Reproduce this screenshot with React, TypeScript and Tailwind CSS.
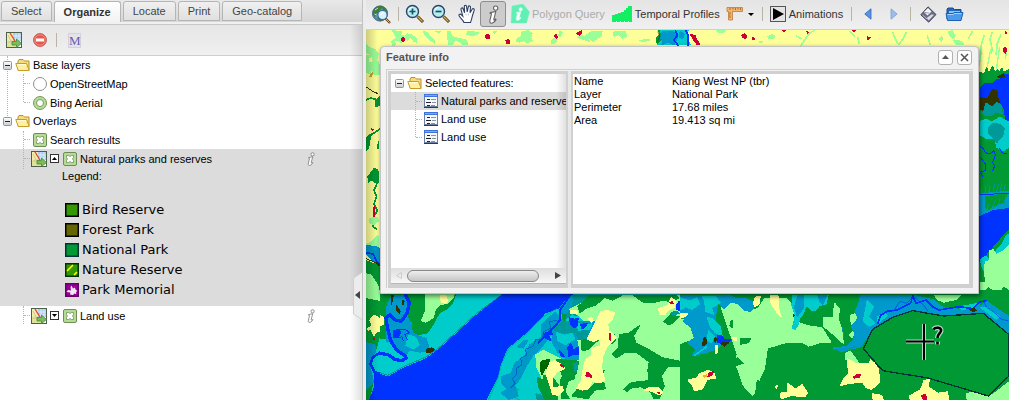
import React, { useState } from "react";

/* ---------- shared icons ---------- */

const LayerIcon = () => (
  <svg width="16" height="16" viewBox="0 0 16 16" className="shrink-0">
    <rect x=".5" y=".5" width="15" height="15" fill="#fff" stroke="#4d5f4d" />
    <rect x="1" y="1" width="6" height="14" fill="#f3ecab" />
    <rect x="7" y="1" width="8" height="8" fill="#a9cdf0" />
    <path d="M10 1v8M13 1v8M7 4h8M7 7h8" stroke="#dcebfa" />
    <path d="M1 9l5-1 4 2v5H1z" fill="#dfe39a" />
    <path d="M2 3l4 8M2 10h4" stroke="#cfc88c" fill="none" />
    <path d="M4 1l5 8" stroke="#e5482d" strokeWidth="1.400" />
    <path d="M6 9.500h4.500V7l5 4.500-5 4V13H6z" fill="#7dbb5c" stroke="#3f8a33" strokeWidth=".8" />
  </svg>
);

const FolderIcon = () => (
  <svg width="16" height="14" viewBox="0 0 16 14" className="shrink-0">
    <path d="M3 12V3l1-1.500h4L9.500 3H14v9z" fill="#f6dc7c" stroke="#b98f2a" />
    <path d="M.8 5.500h10.700l2.700 7H3.200z" fill="#fff0a0" stroke="#c89c2c" />
    <path d="M2.200 6.600h8.800" stroke="#fffde0" />
  </svg>
);

const ToggleIcon = () => (
  <svg width="9" height="9" viewBox="0 0 9 9" className="block">
    <defs>
      <linearGradient id="tgl" x1="0" y1="0" x2="0" y2="1">
        <stop offset="0" stopColor="#fff" />
        <stop offset="1" stopColor="#c8ccd2" />
      </linearGradient>
    </defs>
    <rect x=".5" y=".5" width="8" height="8" rx="1" fill="url(#tgl)" stroke="#8a97a8" />
    <path d="M2 4.500h5" stroke="#222" />
  </svg>
);

const FormIcon = () => (
  <svg width="14" height="14" viewBox="0 0 14 14" className="shrink-0" shapeRendering="crispEdges">
    <rect x=".5" y=".5" width="13" height="12" fill="#f4f7fc" stroke="#6c7f9f" />
    <rect x="0" y="0" width="14" height="3" fill="#3f74dd" />
    <rect x="1" y="1" width="12" height="1" fill="#7ca8f5" />
    <path d="M3 5.500h3M2 8.500h5M3 11.500h3" stroke="#222" />
    <path d="M7 5.500h5M8 8.500h4M7 11.500h4" stroke="#8b93a0" />
    <path d="M0 13.500h14" stroke="#2d3c58" />
  </svg>
);

const InfoGlyph = ({ size = 14, fill = "#fff", stroke = "#666" }: { size?: number; fill?: string; stroke?: string }) => (
  <svg width={size} height={size} viewBox="0 0 14 14">
    <circle cx="8.600" cy="2.300" r="1.600" fill={fill} stroke={stroke} strokeWidth=".8" />
    <path
      d="M4.600 5.600l4.100-.9-1.500 6c-.1.600.5.400 1.400-.4l.3.500C7.700 12.600 6.500 13.400 5.500 13.400c-1.200 0-1.400-1-1.100-2.200l1.100-4.600c0-.4-.4-.4-1-.4z"
      fill={fill}
      stroke={stroke}
      strokeWidth=".8"
    />
  </svg>
);

const Magnifier = ({ minus = false }: { minus?: boolean }) => (
  <svg width="20" height="20" viewBox="0 0 20 20">
    <path d="M12.500 12.500l5.500 5.500" stroke="#4b3a12" strokeWidth="3" />
    <path d="M12.500 12.500l5 5" stroke="#e0ae3c" strokeWidth="1.300" />
    <circle cx="7.500" cy="7.500" r="6" fill="#b6eef0" stroke="#2a4468" strokeWidth="1.400" />
    <path d="M3.500 7a4.500 4.500 0 0 1 4-3.800" stroke="#fff" fill="none" />
    <path d={minus ? "M4.500 7.500h6" : "M4.500 7.500h6M7.500 4.500v6"} stroke="#15546b" strokeWidth="1.700" />
  </svg>
);

const GlobeIcon = () => (
  <svg width="19" height="19" viewBox="0 0 19 19">
    <circle cx="8" cy="8.500" r="7.600" fill="#5b8fb5" stroke="#33597a" strokeWidth=".8" />
    <path d="M1 6l3-4 5-1.500 2 2-3 2-1 3-3 1-1 4-2-3zM10 1l4 2.500 1.500 4-2-1-3-2zM5 13l3-1 3 3-3 1.500z" fill="#3f7d3a" />
    <path d="M3 5l3-2M2.500 9l2 1" stroke="#bfe0ea" />
    <path d="M13.500 13.500l4.500 4.500" stroke="#6b4a12" strokeWidth="2.400" />
    <path d="M13.500 13.500l4 4" stroke="#e6b244" />
    <circle cx="10.500" cy="10" r="4.600" fill="#d9f2fb" stroke="#3d6fa0" strokeWidth="1.200" />
    <path d="M8.500 9.500l3-2" stroke="#fff" strokeWidth="1.400" />
  </svg>
);

const HandIcon = () => (
  <svg width="18" height="20" viewBox="0 0 18 20">
    <path
      d="M6 18.500c-.5-2-4-4.500-5-7-.4-1.300 1.200-1.900 2.200-.9l1.600 1.600L3 5.300c-.3-1.500 1.600-2 2.100-.5l1.500 4L6.300 2.600c0-1.600 2.100-1.700 2.300-.1L9.200 8l1.100-5.200c.4-1.400 2.300-1 2.200.4L12 8.700l2.200-3.500c.9-1.200 2.400-.4 2 1l-2 6.300c-.4 2.600-1 4-1.700 6z"
      fill="#fff"
      stroke="#2e3f63"
      strokeWidth="1.100"
    />
    <path d="M8 9.500v2M10.500 9.500v2" stroke="#aab4c8" strokeWidth=".7" />
  </svg>
);

const PolygonIcon = () => (
  <svg width="20" height="20" viewBox="0 0 20 20">
    <path d="M2 2L13 0l6.500 8-3 11H1z" fill="#5ff0b4" stroke="#7feec5" strokeWidth=".5" />
    <g transform="translate(2 3)">
      <InfoGlyph size={14} stroke="#d5fff0" />
    </g>
  </svg>
);

const BarsIcon = () => (
  <svg width="20" height="16" viewBox="0 0 20 16" shapeRendering="crispEdges">
    <path d="M0 16V9h3V8h3V7h3V6h3V4h2V2h2V0h4v16z" fill="#12ef62" />
    <path d="M4.500 16v-1M8.500 16v-1M12.500 16v-1M16.500 16v-1" stroke="#d6fbe3" />
  </svg>
);

const RulerIcon = () => (
  <svg width="17" height="16" viewBox="0 0 17 16">
    <path d="M1 1.500h15.500v4H6.500V14h-4V5.500H1z" fill="#efb672" stroke="#c07a34" strokeWidth=".8" />
    <path d="M4 2v2M7 2v1.500M9.500 2v2M12 2v1.500M14.500 2v2M3 7h2M3 9h1.500M3 11h2" stroke="#9a5a20" strokeWidth=".8" />
  </svg>
);

const DiamondIcon = () => (
  <svg width="17" height="17" viewBox="0 0 17 17">
    <path d="M8 .8L16 8.500 8.700 16.200.8 8.800z" fill="#6d6f86" stroke="#3c3d50" strokeWidth=".9" />
    <path d="M8 2l3.500 3.400-4 4L4 6z" fill="#f4f4f8" />
    <path d="M11.500 8.500l2.500.3-5.300 5.700-2-2.500z" fill="#dcdce6" />
    <path d="M2.500 9l4.500 4" stroke="#b5b6c6" />
    <path d="M5 6.500l4 .5" stroke="#9b9cb0" />
  </svg>
);

const OpenIcon = () => (
  <svg width="19" height="16" viewBox="0 0 19 16">
    <path d="M2 13V3l1-1h5l1.500 1.500H16V13z" fill="#2169bd" stroke="#164e94" />
    <path d="M4 5h11v3H4z" fill="#8fc1f2" />
    <path d="M1 7.500h7l1-1h9l-2 8H2.500z" fill="#4b9be8" stroke="#1c62b4" />
    <path d="M2.500 8.500h6l1-1h7" stroke="#a5d2fa" fill="none" />
  </svg>
);

/* ---------- layer tree ---------- */

const Row = ({ children, className = "h-[19px]" }: { children: React.ReactNode; className?: string }) => (
  <div className={`flex items-center ${className}`}>{children}</div>
);

const Stub = () => <span className="ml-6 mr-[3px] w-[6px] shrink-0 border-t border-dotted border-[#b5b5b5]" />;

const Check = ({ id }: { id: string }) => (
  <span className="grid h-[14px] w-[14px] shrink-0 place-items-center">
    <input
      id={id}
      type="checkbox"
      defaultChecked
      className="col-start-1 row-start-1 h-[14px] w-[14px] appearance-none rounded-[2px] border border-[#6d8c57] bg-[#b5db94]"
    />
    <svg width="8" height="8" viewBox="0 0 8 8" className="pointer-events-none col-start-1 row-start-1">
      <path d="M.5.5h2L4 1.500 5.500.5h2v2L6.500 4l1 1.500v2h-2L4 6.500l-1.500 1h-2v-2L1.500 4l-1-1.500z" fill="#fff" stroke="#6f905b" strokeWidth=".8" />
    </svg>
  </span>
);

const Radio = ({ id, checked }: { id: string; checked?: boolean }) => (
  <span className="grid h-[14px] w-[14px] shrink-0 place-items-center">
    <input
      id={id}
      type="radio"
      name="base-layer"
      defaultChecked={checked}
      className="col-start-1 row-start-1 h-[14px] w-[14px] appearance-none rounded-full border border-[#8f8f8f] bg-white checked:border-[#789a60] checked:bg-[#b5db94]"
    />
    {checked && <span className="pointer-events-none col-start-1 row-start-1 h-2 w-2 rounded-full border border-[#7a9c63] bg-white" />}
  </span>
);

const Parent = ({ name }: { name: string }) => (
  <Row className="h-[18px]">
    <button aria-label={`Collapse ${name}`} className="ml-[3px] mr-[3px] bg-white">
      <ToggleIcon />
    </button>
    <FolderIcon />
    <span className="ml-[2px]">{name}</span>
  </Row>
);

const ExpandBox = ({ up, name }: { up?: boolean; name: string }) => (
  <button aria-label={name} className="ml-[3px] mr-1 grid h-[9px] w-[9px] shrink-0 place-items-center border border-[#333] bg-white">
    <svg width="5" height="3" viewBox="0 0 5 3">
      <path d={up ? "M0 3L2.500 0 5 3z" : "M0 0L2.500 3 5 0z"} fill="#000" />
    </svg>
  </button>
);

const LayerRow = ({ id, name, open }: { id: string; name: string; open?: boolean }) => (
  <Row>
    <span className="ml-6 mr-px w-[6px] shrink-0 border-t border-dotted border-[#b5b5b5]" />
    <LayerIcon />
    <ExpandBox up={open} name={`Toggle ${name}`} />
    <Check id={id} />
    <label htmlFor={id} className="ml-[3px] grow">{name}</label>
    <button aria-label={`About ${name}`} className="mr-11">
      <InfoGlyph size={14} stroke="#777" />
    </button>
  </Row>
);

const swatches = [
  { name: "Bird Reserve", fill: "#339900", edge: "#000", art: <path d="M2 12L12 2" stroke="#c030c0" strokeDasharray="1.500 .8" /> },
  { name: "Forest Park", fill: "#666600", edge: "#000", art: null },
  { name: "National Park", fill: "#009933", edge: "#003333", art: null },
  { name: "Nature Reserve", fill: "#339900", edge: "#003300", art: <path d="M2 8l6-6M9 12l3-3" stroke="#ff0" strokeWidth="1.600" /> },
  {
    name: "Park Memorial",
    fill: "#990099",
    edge: "#660066",
    art: <path d="M1.500 9l1.500-2 3 .6L5.500 4l1-1.500L8 5.500l2-1 .5 2 2 1.500-1.500 1 .4 2-2-.6L8 12l-3-.4.4-2z" fill="#f4e6f4" />,
  },
];

const tabs = ["Select", "Organize", "Locate", "Print", "Geo-catalog"];

const Divider = ({ className }: { className: string }) => <span className={`h-[14px] w-px shrink-0 bg-[#b8b5a4] ${className}`} />;

const LayerPanel = () => {
  const [active, setActive] = useState("Organize");
  return (
    <aside className="relative flex w-[362px] shrink-0 flex-col bg-white">
      <nav role="tablist" className="flex h-[22px] shrink-0 items-start gap-[2px] bg-linear-to-b from-[#e9e9e9] to-[#d6d6d6] pl-px pt-px">
        {tabs.map((t) => (
          <button
            key={t}
            role="tab"
            aria-selected={t === active}
            onClick={() => setActive(t)}
            className={
              t === active
                ? "h-[21px] rounded-t-[3px] border border-b-0 border-[#b5b5b5] bg-linear-to-b from-white to-[#f2f2f2] px-[9px] font-bold text-[#333]"
                : "h-5 rounded-t-[3px] border border-[#b5b5b5] bg-linear-to-b from-[#f0f0f0] to-[#e0e0e0] px-[9px] text-[#444]"
            }
          >
            {t}
          </button>
        ))}
      </nav>
      <div className="h-[3px] shrink-0 border-b border-[#c8c8c8] bg-[#f0f0f0]" />
      <div className="flex h-[31px] shrink-0 items-center border-b border-[#cfcfcf] bg-linear-to-b from-[#e6e6e6] to-[#f0f0f0] pl-[6px]">
        <button aria-label="Add layer"><LayerIcon /></button>
        <button aria-label="Remove layer" className="ml-[11px]">
          <svg width="14" height="14" viewBox="0 0 14 14">
            <circle cx="7" cy="7" r="6.400" fill="#e9574b" stroke="#c7574f" />
            <circle cx="7" cy="7" r="5.200" fill="none" stroke="#f49a90" strokeWidth=".8" />
            <rect x="3" y="5.500" width="8" height="3" fill="#fff" />
          </svg>
        </button>
        <Divider className="ml-[9px]" />
        <button aria-label="Metadata" className="ml-[11px] grid h-[15px] w-[13px] place-items-center border border-[#d2d2da] bg-[#e2e4ea] font-['Liberation_Serif',serif] text-[13px] leading-[13px] text-[#6a5cae]">
          M
        </button>
      </div>

      <div className="relative">
        <div className="absolute left-[7px] top-0 h-[60px] border-l border-dotted border-[#b5b5b5]" />
        <div className="relative">
          <Parent name="Base layers" />
          <div className="relative">
            <div className="absolute left-[23px] top-0 h-7 border-l border-dotted border-[#b5b5b5]" />
            <Row><Stub /><Radio id="osm" /><label htmlFor="osm" className="ml-[3px]">OpenStreetMap</label></Row>
            <Row><Stub /><Radio id="bing" checked /><label htmlFor="bing" className="ml-[3px]">Bing Aerial</label></Row>
          </div>
          <Parent name="Overlays" />
          <Row><Stub /><Check id="search" /><label htmlFor="search" className="ml-[3px]">Search results</label></Row>
          <section className="bg-[#dcdcdc]">
            <LayerRow id="parks" name="Natural parks and reserves" open />
            <p className="ml-[62px] h-8 leading-4">Legend:</p>
            <ul className="pb-[6px] pl-[65px] font-['DejaVu_Sans',sans-serif] text-[13px]">
              {swatches.map((s) => (
                <li key={s.name} className="flex h-5 items-center gap-[3px]">
                  <svg width="14" height="14" viewBox="0 0 14 14">
                    <rect x=".5" y=".5" width="13" height="13" fill={s.fill} stroke={s.edge} strokeWidth="2" />
                    {s.art}
                  </svg>
                  {s.name}
                </li>
              ))}
            </ul>
          </section>
          <LayerRow id="landuse" name="Land use" />
          <div className="absolute left-[23px] top-[75px] h-[38px] border-l border-dotted border-[#b5b5b5]" />
          <div className="absolute left-[23px] top-[250px] h-[18px] border-l border-dotted border-[#b5b5b5]" />
        </div>
      </div>
      <div className="pointer-events-none absolute bottom-0 right-0 top-[25px] w-3 bg-linear-to-r from-transparent to-black/12" />
      <button aria-label="Collapse panel" className="absolute right-0 top-[272px]">
        <svg width="9" height="48" viewBox="0 0 9 48" className="block">
          <path d="M9 .5L.5 6v36L9 47.500" fill="#ececec" stroke="#cfcfcf" />
          <path d="M7 19v8l-5-4z" fill="#444" />
        </svg>
      </button>
    </aside>
  );
};

/* ---------- map ---------- */

const Y = "#ffff99", L = "#99ff99", G = "#009933", B = "#0033ff", C = "#00cccc", M = "#0099cc", T = "#009999", D = "#333300", R = "#cc0033";

/* A round-joined outline in the fill colour softens the corners of each patch. */
const P = ({ f, d }: { f: string; d: string }) => <path fill={f} stroke={f} strokeWidth="4" strokeLinejoin="round" d={d} />;
const S = ({ c, w = 3, d }: { c: string; w?: number; d: string }) => (
  <path fill="none" stroke={c} strokeWidth={w} strokeLinejoin="round" strokeLinecap="round" d={d} />
);

const LandCover = () => (
  <svg className="absolute inset-0 h-full w-full" viewBox="366 30 643 370" preserveAspectRatio="xMinYMin slice" shapeRendering="crispEdges" role="img" aria-label="Land cover map">
    <rect x="366" y="30" width="643" height="370" fill={Y} />

    {/* northern strip, west */}
    <svg x="366" y="0" width="330" height="80" viewBox="0 0 990 240">
      <P f={L} d="M80 92l8 14 4 8-6 8 14-2 4 8 10-12 10 4 8-10 8 6 4 8 8 2-2-12-12-8-14-4-8 8-14-6 6-8zM78 124l6-6 4 16-8 2zM172 94l12 4 10 14 10 8 2 10-14-12-12-10zM244 94h8l4 14 14 6 30 6 4 12-14 0-16-12-12 4-2 10-12-2-2-18zM302 102l12 4 16-2 8-6-16-2-16-2zM382 94l4 6 4-6zM454 116l12-6 2-14 18-4 12 8-4 12 4 10-14 6-12-6-12 4-8-2zM582 94l6 2-6 14-4-4zM558 120l12-6 4 4-6 10-10 2zM680 94l28 0-2 12-16 12-10 6-10-12-10-6zM742 98l8-4 28 2 4 14-14 4-10-10-14 4zM822 122l22-4 6 2-18 4zM634 112l14-4 18 4 4 12-18-6zM208 94l16 0-4 4z" />
      <P f={R} d="M107 116l6-3 2 7-4 4-3-2zM358 108l8-5 6 8-4 5-8-3zM420 122l6-4 5 8-2 5-7-2zM566 108l5-4 4 8-3 3zM632 100l6-3 8-4 1 6-5 6-6-2zM974 104l16 4v20l-8-10z" />
      <P f={G} d="M872 114l10-10-4-12h8l6 16-8 26h-10z" />
      <P f={C} d="M884 92h82l-4 18 10 24H874l16-16z" />
      <P f={M} d="M890 94l32 0 12 18-10 22-18-8-18 8 4-14-10-8zM942 96l12 6-4 14-10-6z" />
      <S c={B} w={5} d="M928 90l6 16-10 14 12 16M958 90l8 14 0 32" />
      <S c={D} w={2} d="M876 96l6 14-8 14" />
    </svg>

    {/* northern strip, east */}
    <svg x="696" y="0" width="313" height="80" viewBox="18 0 939 240">
      <P f={R} d="M2 104l12 6 8 12 6 10-8 0-8-12zM156 106l8-4 6 6-4 8-8-4zM188 114l4 0 1 5-4-1zM278 91h8l-4 3zM350 94l6 3-2 3zM488 91l8 0-4 4zM532 110l4 2 4 0-6 8zM947 96l3 2-2 2zM942 144l5-2 2 10-3 8-6-8z" />
      <P f={L} d="M80 92h26l-8 6-12 0zM234 110l12-6 8 4-2 6-16 2zM208 125l8 0-2 2-6 0zM750 114l4-4 4 6-4 8-4-4zM776 96l10-4 8 16-4 8-10-8zM792 120l20 4 8 8-20 2-6-8z" />
      <S c={L} w={5} d="M372 92l-14 8-10 14-14 22M320 108l14 8M480 94l14 14M504 114l4 16M608 98l10 22 8 14 12-16 10-20M712 108l8 24M846 96l-10 18M882 106l-8 30-2 20M906 98l-6 20 6 26-2 16M932 106l-10 24-4 34" />
    </svg>

    {/* western margin */}
    <svg x="362" y="28" width="24" height="270" viewBox="0 0 72 810">
      <P f={L} d="M12 48l12 12 14 4 10 14-4 18 8 14 4 28-16 2-12-14-4 10-12-4V84l14-4-14-8z" />
      <P f={Y} d="M22 92l6-2 2 8-6 4z" />
      <P f="#bbaa22" d="M24 144l8-10-4 10-6 2z" />
      <S c={D} w={3} d="M14 178l18 12 14 6" />
      <P f={G} d="M42 216l10-10v26l-10 4zM14 336l6-14 8-4-6 24-2 16-6 8zM18 444l8-8 10-14 8 2 6 8v30l-12 2-8-10-10 8z" />
      <S c={G} w={5} d="M12 216l14-6 16 4M12 330l20-12 24-16M50 340l-2 20M48 460l-12 26 8 20-8 22 10 20-14 24 2 24 10 8" />
      <P f={R} d="M35 538l3-2-1 28-3 0zM30 303l3 2-3 1z" />
      <P f={L} d="M22 572l22-4 6 10-16 12-12-6zM14 650l18-10 14-16 4 4v26l-18 8-18 4z" />
      <P f={M} d="M12 652l36 6 24 16v46l-24-8-36-36z" />
      <S c={B} w={5} d="M12 674l22 4 12 26 14 10" />
      <S c={D} w={3} d="M12 692l30 12 20 18" />
      <P f={G} d="M12 698l30 12 14 14 16 10v76H12z" />
      <P f={L} d="M12 738l16 4 20 32v36H12z" />
    </svg>

    {/* eastern margin */}
    <svg x="976" y="46" width="33" height="254" viewBox="48 78 99 762">
      <S c={L} w={4} d="M64 96l-6 40M92 88l-10 50M118 84l-8 60M140 96l-4 20" />
      <P f={R} d="M134 86l3-2 2 8-3 6-3-4z" />
      <P f={G} d="M48 154l14 4 12 4 6-18 6 16 12-20 6 18 8-8 6 6 8-10 4 10 17-6v694H48z" />
      <P f={B} d="M62 202l12-10 24 0 12-14 12 0 6-12 20-2v146l-10-2-4-40-20-28-30 22-22-18z" />
      <P f={D} d="M62 234l20 4 10-18 6-12 12 4 2 18 6 16-14 20-18-4-10 10-14-4zM114 170l16-8 4 6-14 6z" />
      <P f={T} d="M64 278l8-6 6-22 20 12 12-14 14 8 2 26-16-6-18 10-18 0z" />
      <P f={C} d="M62 304l18-6 16 8 24-14 16 10 11 4v74l-16 12-20-10-6-28-24 2-18-10z" />
      <P f={T} d="M86 322l14-12 20 4 12 12-4 20-18 22-14-18-10-12z" />
      <S c={B} w={3} d="M60 378l10 8 6 12 14 4 12-10 4 14-8 20 6 12-6 14M60 410l16 22 0 20-14 4M62 458l6 12M140 402l-14-4-8-14" />
      <P f={M} d="M60 522l87-8v46l-60 16-27 14z" />
      <P f={G} d="M78 530l62-8-8 24-26 10-20 12-8-6z" />
      <S c={T} w={3} d="M62 524l4-22M74 522l4-24M86 520l4-22M98 520l6-30M108 520l8-28M118 520l8-30M130 518l6-26M80 572l6-20M96 568l10-28M114 562l6-26M132 556l6-30" />
      <S c={B} w={3} d="M60 524l87-4" />
      <P f={B} d="M60 590l40-18 47-6v58l-36 40-24 28-27 32z" />
      <P f={C} d="M62 718l16-10 8 8 40-42 12-24 9-8v30l-18 24-24 12-18 12 4 12-10-2 2 16-12 4-6-12z" />
      <P f={L} d="M76 726l12-4 0-30 12-2 8 14 20-10 19-18v132l-16-12-10 16-28-6-12-10-8-36z" />
      <P f={L} d="M62 788l18 0 6 10-8 8-16 10z" />
    </svg>

    {/* river mouth, western bank */}
    <svg x="366" y="290" width="14" height="110" viewBox="78 60 42 330">
      <rect x="78" y="60" width="42" height="330" fill={G} />
      <P f={L} d="M78 15h20l20 30v45l-40-8z" />
      <P f={Y} d="M90 150l12-14 8 4 10 6v36l-14 6-4 10-8-20-10 2v-4l12-10z" />
      <P f={R} d="M100 204l4 1 0 3-4-1z" />
      <P f={M} d="M78 218l24 6 8 18-14 40 6 50-24 28z" />
      <P f={C} d="M120 206v180H92l12-54-10-40 14-40z" />
      <P f={B} d="M120 307v83H90l14-40 0-44z" />
      <S c={B} w={8} d="M120 248l-22 14-6 20 12 24 16 6" />
    </svg>

    {/* estuary and western land */}
    <svg x="380" y="290" width="300" height="110" viewBox="0 120 900 330">
      <rect x="0" y="120" width="900" height="330" fill={C} />
      <P f={G} d="M0 120h230l-12 38-20 20-20 10-16 30-20 30-28 6-22-10-10-18-24-30-14 10-14 30-14 28H0z" />
      <P f={L} d="M136 122h90l-8 22-16 16-24 4-14 18-4 20-22 14-14-4 14-30-2-20z" />
      <P f={Y} d="M182 138l16 0 5 16-7 6-12-4zM0 198l10 4 0 20-10 6z" />
      <P f={M} d="M38 136l42 0 10 28-10 38 14 16 2 30 18 10 24 8 8 22-4 14-22 4-32-6-14 20-26-20-26-18-4-60 4-60z" />
      <P f={C} d="M86 256l20 6 12 22-18 12-22-10zM22 282l12-8 28 40 0 14-28-8z" />
      <P f={D} d="M36 136h4l-4 16-2 12zM50 168l4 6 6 12-2 3-8-9zM68 152l4 3-2 9-3-4zM140 298l16-4 6 4-6 8-16 2z" />
      <S c={B} w={10} d="M76 134l12 24-6 30-18 26-18-4-16-16-12 8 4 30 10 40 18 28 24 16 4 8-12 8-22-4-20-14-24-4" />
      <P f={B} d="M42 242l14-4 6 10-6 12-14 2z" />
      <S c={B} w={3} d="M40 246l16-8 20 0 12 10-14 6 8 16M52 264l14-4 4 12" />
      <S c={T} w={3} d="M366 134l-76 56-112 102-38 28-70 30-46 26-24-8" />
      <P f={B} d="M368 134H576L536 174l-40 14-56 58-60 50-20 50-8 36-34 66H0v-74l24 8 44-26 72-30 40-30 110-100z" />
      <P f={T} d="M542 182l30-46h64l-8 18-50 36-24 20zM576 188l18-18 8 8-14 20z" />
      <P f={L} d="M622 152l20-16H900v316H492l-6-70-16-30-2-38 22-12 30 14 30 16 32 4 14-32-6-60 30-26-34-30-18-10z" />
      <P f={M} d="M486 222l38-34 14 10-4 40-18 12-30 40-28 26-24 40-14 30-16 20 10 32-28 10-22-20 20-10-20-20 0-18 30-10 10-30 30-20 14-34 38-24z" />
      <P f={M} d="M542 172l14-20 22-12-4 28-24 30zM412 290l18-18 12 0-12 22z" />
      <S c={T} w={2} d="M516 202l-16 12-4 16 12 4-18 20-20 20 6 12-28 16-6 24-14 6 10 16-26 16 14 10-22 20-4 20 16 4-14 24 30 14M530 176l-36 22-26 22-24 28-60 50-20 46-10 40-28 64" />
      <S c="#0066cc" w={3} d="M530 210l-22 6 4 18-22 12-2 22-20 0-10 22-22 8 4 18-18 8 4 20-18 12 2 18-14 12 10 14-14 14" />
      <P f={T} d="M522 230l18-22 30 10 44-4 48 4 8 38-18 10-70 4-40 20-8 18-18-38z" />
      <P f={M} d="M518 242l28 10 40 0 8 38 0 38-34 0-24-20-18-28zM612 216l46 0 8 36-26-2z" />
      <P f={C} d="M530 248l24 8 22-6 8 16-28 18-22-12zM584 216l26 10 26-4-8 16-32 2z" />
      <P f={B} d="M568 204l16 4 10-2-4 24-8 4-10-10zM602 224l20-4-6 10-10 6zM564 292l8-10 8 18 14-8 0 22-16 0-12 6zM538 302l12 12 2 6-8 0zM492 250l22-4 4 6-14 0 8 20-18-10z" />
      <S c={B} w={6} d="M570 136l-30 44 0 30-20 24-22 20-22 24" />
      <P f={G} d="M548 192l10 4-4 14-6-4zM594 170l38-34 66 0 26 0-26 14-24-8-26 22-30 10-18 14zM762 136h126l8 8-26 10-20-4-30 8-30-2-12-8zM852 214l28-28 8 14 10 0-18 18-14 6zM718 254l28-4 32-22-18 30 8 22 30 14 50 30 50 10 0 16-34-2-20 30 8 30-14 38-16 0-10-22-30-14-30 4-10 10-10-6 22-20 54-6-4-30 4-26-40-30-32 0-28 18-12-12 20-18z" />
      <P f={G} d="M472 382l18 10 0-14 20-6 28 38-6 38H494l-18-39zM530 328l66 6-8 38-38 10-8-20-26-14zM542 390l10-20 30 0 0 16-18 8-10 30 14 22h-24zM606 298l-2-26 36-10 22 6-14 8-20 20-18 6zM576 438l16-20 30 4 20-20 28-10 6 24-32 4-20 26zM662 362l10 0-6 26-4-6zM702 254l5 14-11 14-4-5z" />
      <P f="#006600" d="M482 338l14-12 12 4 0 20-14 6-8 18-4-14z" />
      <P f={L} d="M486 312l18-2 22 14-16 0-18 4z" />
      <P f={Y} d="M572 182h18l3 8-20 0zM626 206l8-4 6 10-6 4zM662 186l18-4 24 6-8 20-14 14 4 20 22 20-10 12-20 20-10 26-4 30 10 42-12 6-26-4-10 22-18 4-18-6 14-20 6-36 6-28 18-12 2-24 28-6-6-22-18 8-18-6zM498 370l12-32 14-6 20 12 10 12-22 8-16 20 2 30 28-4 4 12-14 14-18-4zM840 194l-4-18 28-10 10-22 14 10-6 18-20 10-8 12zM794 420l16-8 26 2 12 12-10 8-28-12-18-2z" />
      <P f={R} d="M619 370l4-2 12 10 0 4-17-4zM690 252l2 0 0 18-2 0zM541 343l10 6 0 2-8-4zM870 157l7-1 2 4-6 0zM832 427l6 2-1 3z" />
      <P f={B} d="M890 166l8-12 2 0v28l-10-4z" />
      <P f={T} d="M872 190l18-6 8 6-18 4zM582 342l10-4 0 20-8 6zM468 432l18 4 4 12h-18z" />
    </svg>

    {/* southern land and national park */}
    <svg x="680" y="290" width="329" height="110" viewBox="0 120 987 330">
      <rect x="0" y="120" width="987" height="330" fill={G} />
      <P f={L} d="M122 172l20-20 32 4 20 30 40-10 20-30h66l26 30 10 42 30 10 40 6 26 42-26 0-40 12-20-12-44 0-60 18-10 66-14 26-2 28-18 22-28-30-20-58 0-34 38H0V324l30-16 30-20 14-28 30 0 14-30 10-30z" />
      <P f={L} d="M0 208l36 8 22 18-6 28-52 18zM432 202l28 0 4-42 14 18-4 30 14 36 2 36-16-14-28-26-14-10zM512 196l26-8-4 28 4 18-22 28-8-8 18-18-12-16zM496 310l14-6 14 18 12 18-20-6-18-6zM764 136h78l-14 12-36 8-20-8zM860 432l38-12 40 14 49-38v54H862z" />
      <P f={G} d="M112 354l26 6-18 20 28 18 18-24-18-6 4-18 38-10-18-16-42 14zM2 310l12-8 18 2-18 8zM48 242l16-6 0 12-14 4zM56 268l16-8-4 16-12 4zM182 266l30 0-8 12-22 4zM152 214l6-2-2 22-6-6zM92 344l18-12 18-8-6 16-18 8zM4 400l18-14 12 0-18 22-10 6zM232 392l24 10 10 24-20 22-20-10z" />
      <P f={M} d="M0 136h148l20 10 30 0 20 10 2 18-8 10-18-4-20-20-22-4-20 20-18-20-6 30-4 40 20 30 0 28-18 14-30 10-38 8 10-18-24-20 20-14-10-30-22-20 4-20-24-10z" />
      <P f={C} d="M0 144l30 10 20-10 8 18-22 16-20-8-16 10zM68 140l38 0 14 18-26 16 6 18-22-8-4-30zM82 202l18 6 20 20 6 28-20-8-16-20zM86 242l16 18-8 18-12-8z" />
      <P f={B} d="M112 258l12-2 10 14 18 0-8 10-32-2z" />
      <P f={D} d="M70 268l6-6 4 16-11 10zM106 264l4 2-4 10-3-4zM122 280l22-2-10 10zM341 195h5v4h-5z" />
      <S c={C} w={5} d="M80 290l-36 26" />
      <P f={Y} d="M226 142l14-2-4 24-12 6-3-12zM272 138h22l0 32 9 30-7-6-18-26-6-14zM0 192l22 0-4 6-18 6zM107 288l5 0 0 20-5 2zM158 264l10-2 3 8-9 0zM24 390l28-6 6-12 24-10 18 4 6 18-24 4-14 28-24 6-8-18zM302 430l22-4 0-26 22 18 20-14 16 24-8 12-40-4-30 10zM502 326l28 16 38 0 4-12 14 12 10 18 2 38-24 20-16-6-10-16-40 4-26 6 10-22 14-14zM578 432l26 4 6 14h-30zM722 420l10-28 16-4-4 22 30 20 28-4 4 24H692l-4-12zM289 406l2 0-1 8-2-2z" />
      <P f={R} d="M88 368l12-2-4 9-12 4zM522 380l12-7 7 2-3 7-16 2zM724 437l13-3 3 16h-9z" />
      <P f="#ffaa33" d="M70 378l10-3-2 4-6 2z" />
      <P f={C} d="M338 136h106l-6 26-20 4-10 14-14 0-14-14-14 30-14 10-6 32-8-4 8-38-10-30zM360 202l-8 28-10 6 8-28z" />
      <P f={M} d="M354 136h16l0 38-18 24-8-28zM414 136l26 0-12 26-8-8z" />
      <P f={M} d="M542 136h108l50 0 60 14 30 24 46 4 40-14 30 2 14-12 36 26 31 20v52l-60-48-30-12-100 8-100-18-60 22-50 36-34 32-10 18-28 6-30 8-24-10 40-4 20-20 4-20-10-20 20-26-10-20 10-18z" />
      <P f={C} d="M562 152l18 18-14 30 18 20-16 8-18-14zM592 202l22-14 8 8-26 22zM842 170l54-10-14 14-38 4zM902 172l18 0 38 28-8 8z" />
      <S c={B} w={5} d="M594 220l8-24 20-12 30-4 40-20 6-24 10 24 30-10 20 20 20 10 60-10 40 6 20-20 20-4" />
      <S c={B} w={2} d="M640 184l20-30 20 6 20-20 30 24 14 20M910 152l10 20 24 16 20 20 20 4" />
      <P f={D} d="M870 179l12-3 6 5-8 3z" />
      <S c={T} w={3} d="M460 298l36 2 30-10M488 236l4 34" />
      <path d="M578 238l60-36 60-20 94 16 118-8 77 64V378l-62 60L744 384 608 362l-58-66z" fill={G} stroke="#003333" strokeWidth="4" />
    </svg>
  </svg>
);

const Cursor = () => (
  <svg width="40" height="38" viewBox="0 0 40 38" className="absolute left-[539px] top-[293px]">
    <path d="M19 1v36M1 18.500h28" stroke="#b5d8c0" strokeWidth="4" />
    <path d="M19 1v36M1 18.500h28" stroke="#000" strokeWidth="2" />
    <path d="M28.500 6.500c2-3 8.500-2 7.500 1.500-.7 2.500-3.500 3-3.500 7M32.500 18.500v3" fill="none" stroke="#b5d8c0" strokeWidth="5" />
    <path d="M28.500 6.500c2-3 8.500-2 7.500 1.500-.7 2.500-3.500 3-3.500 7M32.500 18.500v3" fill="none" stroke="#000" strokeWidth="2.600" />
  </svg>
);

/* ---------- map toolbar ---------- */

const MapToolbar = () => (
  <div className="flex h-[30px] shrink-0 items-center whitespace-nowrap border-b border-[#d0d0d0] bg-linear-to-b from-[#e4e4e4] to-[#f0f0f0] pb-px pl-[6px] text-[#333]">
    <button aria-label="Full extent"><GlobeIcon /></button>
    <Divider className="ml-[7px]" />
    <button aria-label="Zoom in" className="ml-[6px]"><Magnifier /></button>
    <button aria-label="Zoom out" className="ml-[6px]"><Magnifier minus /></button>
    <button aria-label="Pan" className="ml-[7px]"><HandIcon /></button>
    <button aria-label="Feature info" aria-pressed="true" className="ml-1 grid h-[26px] w-[26px] place-items-center rounded-[3px] border border-[#8e8e8e] bg-[#cccccc]">
      <InfoGlyph size={19} stroke="#666" />
    </button>
    <button disabled className="ml-1 flex items-center gap-[2px] text-[#aaa]"><PolygonIcon />Polygon Query</button>
    <button className="ml-[7px] flex items-center gap-[3px]"><BarsIcon />Temporal Profiles</button>
    <button aria-label="Measure" className="ml-[6px] flex items-center gap-[5px]">
      <RulerIcon />
      <svg width="6" height="3" viewBox="0 0 6 3"><path d="M0 0h6L3 3z" fill="#000" /></svg>
    </button>
    <Divider className="ml-2" />
    <button className="ml-[7px] flex items-center gap-[3px]">
      <svg width="16" height="16" viewBox="0 0 16 16">
        <rect x=".5" y=".5" width="15" height="15" fill="#e4e4e4" stroke="#555" />
        <path d="M3 2l11 6-11 6z" fill="#000" />
      </svg>
      Animations
    </button>
    <Divider className="ml-2" />
    <button aria-label="Previous view" className="ml-3">
      <svg width="8" height="12" viewBox="0 0 8 12"><path d="M7 .8v10.400L.8 6z" fill="#5c93e6" stroke="#2b62bd" strokeWidth=".8" /></svg>
    </button>
    <button aria-label="Next view" className="ml-[18px]">
      <svg width="8" height="12" viewBox="0 0 8 12"><path d="M1 .8v10.400L7.200 6z" fill="#9dbcea" stroke="#7ba0d8" strokeWidth=".8" /></svg>
    </button>
    <Divider className="ml-[12px]" />
    <button aria-label="Save" className="ml-[9px]"><DiamondIcon /></button>
    <button aria-label="Open" className="ml-2"><OpenIcon /></button>
  </div>
);

/* ---------- feature window ---------- */

const info = [
  ["Name", "Kiang West NP (tbr)"],
  ["Layer", "National Park"],
  ["Perimeter", "17.68 miles"],
  ["Area", "19.413 sq mi"],
];

const FeatureWindow = () => (
  <section className="absolute left-[14px] right-[30px] top-4 flex h-[248px] flex-col rounded-t-[4px] border border-[#c4c4c4] bg-[#f2f2f2] px-[5px] pb-[5px] shadow-[1px_2px_5px_rgba(0,0,0,0.55)]">
    <header className="flex h-[22px] shrink-0 items-center gap-1 pb-[2px] pr-px">
      <h2 className="grow font-bold text-[#555]">Feature info</h2>
      <button aria-label="Collapse" className="grid h-[15px] w-[15px] place-items-center rounded-[3px] border border-[#b0b0b0] bg-white">
        <svg width="7" height="4" viewBox="0 0 7 4"><path d="M0 4L3.500 0 7 4z" fill="#555" /></svg>
      </button>
      <button aria-label="Close" className="grid h-[15px] w-[15px] place-items-center rounded-[3px] border border-[#b0b0b0] bg-white">
        <svg width="9" height="9" viewBox="0 0 9 9"><path d="M1 1l7 7M8 1L1 8" stroke="#555" strokeWidth="1.500" /></svg>
      </button>
    </header>
    <div className="flex min-h-0 grow border-l border-t border-[#cfcfcf] pl-px pt-px">
      <div className="flex min-w-0 grow gap-[3px] bg-[#e8e8e8]">
        <div className="relative flex w-[180px] shrink-0 flex-col overflow-hidden border-b-4 border-l-[3px] border-r-2 border-t-[3px] border-[#d0d0d0] bg-white">
          <div className="flex h-[18px] shrink-0 items-center pl-1">
            <button aria-label="Collapse selected features" className="mr-[3px]"><ToggleIcon /></button>
            <FolderIcon />
            <span className="ml-[2px]">Selected features:</span>
          </div>
          <ul className="relative">
            {["Natural parks and reserves", "Land use", "Land use"].map((n, i) => (
              <li key={i} className={i === 0 ? "flex h-[18px] items-center whitespace-nowrap bg-[#dcdcdc]" : "flex h-[18px] items-center whitespace-nowrap"}>
                <span className="ml-[25px] mr-[2px] w-[6px] shrink-0 border-t border-dotted border-[#b5b5b5]" />
                <FormIcon />
                <span className="ml-[3px]">{n}</span>
              </li>
            ))}
            <li aria-hidden="true" className="absolute left-6 top-0 h-[45px] border-l border-dotted border-[#b5b5b5]" />
          </ul>
          <div className="pointer-events-none absolute bottom-4 right-0 top-0 w-[10px] bg-linear-to-r from-transparent to-black/12" />
          <div className="mt-auto flex h-4 shrink-0 items-center border-b border-[#b8b8b0] bg-linear-to-b from-[#dedede] to-[#f8f8f8] px-[5px]">
            <svg width="6" height="7" viewBox="0 0 6 7"><path d="M5.500.5v6l-5-3z" fill="none" stroke="#ccc" /></svg>
            <span className="ml-[5px] h-3 w-[132px] rounded-full border border-[#888] bg-linear-to-b from-[#eee] to-[#c6c6c6]" />
            <svg width="6" height="7" viewBox="0 0 6 7" className="ml-auto"><path d="M0 0v7l6-3.500z" fill="#444" /></svg>
          </div>
        </div>
        <div className="min-w-0 grow border-4 border-l-2 border-t-[3px] border-[#d0d0d0] bg-white pl-px pt-px">
          <table className="leading-[13px]">
            <tbody>
              {info.map(([k, v]) => (
                <tr key={k}>
                  <th scope="row" className="w-[98px] p-0 text-left font-normal">{k}</th>
                  <td className="p-0">{v}</td>
                </tr>
              ))}
            </tbody>
          </table>
        </div>
      </div>
    </div>
  </section>
);

export default function App() {
  return (
    <div className="flex h-screen overflow-hidden bg-[#ececec] font-['Liberation_Sans',Arial,sans-serif] text-[11px] leading-[14px] text-black">
      <LayerPanel />
      <div className="w-1 shrink-0 border-l border-[#c2c2c2] bg-[#ececec]" />
      <main className="flex min-w-0 grow flex-col">
        <MapToolbar />
        <div className="relative grow overflow-hidden">
          <LandCover />
          <div className="pointer-events-none absolute inset-y-0 left-0 w-3 bg-linear-to-r from-black/20 to-transparent" />
          <Cursor />
          <FeatureWindow />
        </div>
      </main>
    </div>
  );
}
